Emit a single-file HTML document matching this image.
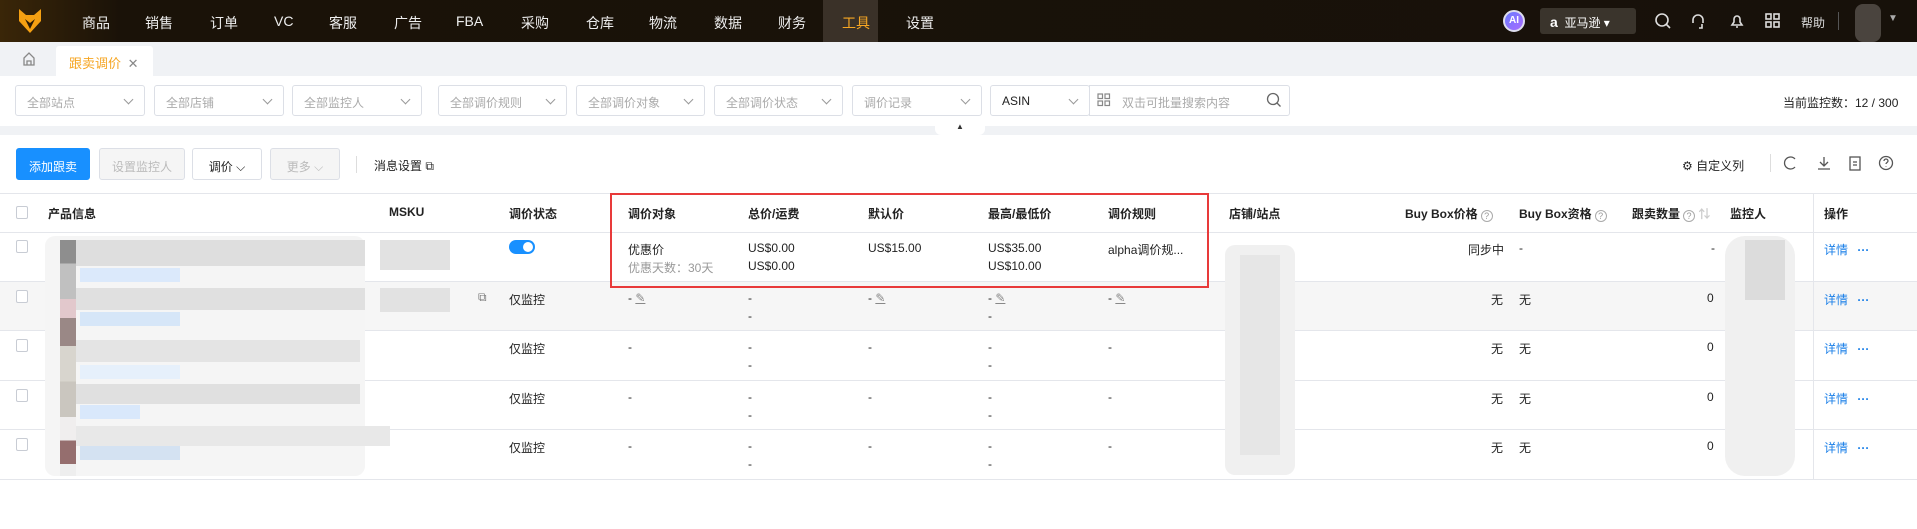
<!DOCTYPE html>
<html><head><meta charset="utf-8"><style>
*{margin:0;padding:0;box-sizing:border-box}
body{width:1917px;height:529px;overflow:hidden;background:#fff;font-family:"Liberation Sans","Noto Sans CJK SC",sans-serif;font-size:12px;color:#222;position:relative}
.a{position:absolute;white-space:nowrap}
.nav{left:0;top:0;width:1917px;height:42px;background:linear-gradient(90deg,#3a2608 0,#1a1208 120px,#17110a 100%)}
.ni{top:13px;color:#eee;font-size:14px}
.sel{height:31px;top:85px;border:1px solid #dcdfe6;border-radius:3px;color:#aaa;padding:8px 0 0 11px;font-size:12px}
.sel:after{content:"";position:absolute;right:12px;top:10px;width:6px;height:6px;border-right:1px solid #999;border-bottom:1px solid #999;transform:rotate(45deg)}
.btn{top:148px;height:32px;border:1px solid #dcdfe6;border-radius:3px;text-align:center;padding-top:9px;font-size:12px}
.th{top:205px;font-weight:bold;font-size:12px;color:#222}
.hl{left:0;width:1917px;height:1px;background:#e4e6eb}
.cb{left:16px;width:12px;height:13px;border:1px solid #c8ccd4;border-radius:2px;background:#fff}
.c{font-size:12px;color:#222}
.q{display:inline-block;width:12px;height:12px;border:1px solid #aaa;border-radius:50%;font-size:9px;color:#999;text-align:center;line-height:10px;vertical-align:-1px;margin-left:3px;font-weight:normal}
.lnk{color:#1a7fe8}
.bar{position:absolute;height:20px;background:#dedede}
</style></head><body>
<div class="a nav"></div>
<svg class="a" style="left:18px;top:8px" width="24" height="26" viewBox="0 0 24 26"><path d="M1 1 L8 7 H16 L23 1 V13 L12 25 L1 13Z" fill="#f4a012"/><path d="M7 11 L12 15 L17 11 L12 21Z" fill="#2a1a05"/></svg>
<div class="a ni" style="left:82px">商品</div><div class="a ni" style="left:145px">销售</div><div class="a ni" style="left:210px">订单</div><div class="a ni" style="left:274px">VC</div><div class="a ni" style="left:329px">客服</div><div class="a ni" style="left:394px">广告</div><div class="a ni" style="left:456px">FBA</div><div class="a ni" style="left:521px">采购</div><div class="a ni" style="left:586px">仓库</div><div class="a ni" style="left:649px">物流</div><div class="a ni" style="left:714px">数据</div><div class="a ni" style="left:778px">财务</div>
<div class="a" style="left:823px;top:0;width:55px;height:42px;background:#3a3128"></div>
<div class="a ni" style="left:842px;color:#f6a623">工具</div><div class="a ni" style="left:906px">设置</div>
<div class="a" style="left:1503px;top:10px;width:22px;height:22px;border-radius:50%;background:linear-gradient(135deg,#6a7bff,#a86bff);border:2px solid #dde;color:#fff;font-weight:bold;font-size:10px;text-align:center;line-height:18px">AI</div>
<div class="a" style="left:1540px;top:8px;width:96px;height:26px;background:#3a342c;border-radius:3px;color:#fff;font-size:12px;padding:6px 0 0 10px"><b style="font-size:14px">a</b>&nbsp; 亚马逊 ▾</div>
<svg class="a" style="left:1654px;top:12px" width="18" height="18"><circle cx="8" cy="8" r="6" fill="none" stroke="#ddd" stroke-width="1.6"/><path d="M12 12l4 4" stroke="#ddd" stroke-width="1.6"/></svg>
<svg class="a" style="left:1689px;top:12px" width="18" height="18"><path d="M4 11V8a5 5 0 0110 0v3M10 16h3v-4" fill="none" stroke="#ddd" stroke-width="1.6"/></svg>
<svg class="a" style="left:1728px;top:12px" width="18" height="18"><path d="M4 13h10l-2-3V7a3 3 0 00-6 0v3z M8 15h2" fill="none" stroke="#ddd" stroke-width="1.6"/></svg>
<svg class="a" style="left:1764px;top:12px" width="18" height="18"><g fill="none" stroke="#ddd" stroke-width="1.6"><rect x="2" y="2" width="5" height="5"/><rect x="10" y="2" width="5" height="5"/><rect x="2" y="10" width="5" height="5"/><rect x="10" y="10" width="5" height="5"/></g></svg>
<div class="a" style="left:1801px;top:14px;color:#ddd;font-size:12px">帮助</div>
<div class="a" style="left:1838px;top:12px;width:1px;height:18px;background:#555"></div>
<div class="a" style="left:1855px;top:4px;width:26px;height:38px;background:#4a443e;border-radius:8px"></div>
<div class="a" style="left:1888px;top:13px;color:#aaa;font-size:10px">▼</div>
<div class="a" style="left:0;top:42px;width:1917px;height:34px;background:#f0f2f5"></div>
<svg class="a" style="left:22px;top:51px" width="14" height="16"><path d="M2 7L7 2l5 5v7H2z M5 14v-4h4v4" fill="none" stroke="#888" stroke-width="1.3"/></svg>
<div class="a" style="left:56px;top:46px;width:97px;height:30px;background:#fff;border-radius:3px 3px 0 0"></div>
<div class="a" style="left:69px;top:53px;color:#f6a623;font-size:13px">跟卖调价 <span style="color:#888;margin-left:3px">✕</span></div>
<div class="a sel" style="left:15px;width:130px">全部站点</div>
<div class="a sel" style="left:154px;width:130px">全部店铺</div>
<div class="a sel" style="left:292px;width:130px">全部监控人</div>
<div class="a sel" style="left:438px;width:129px">全部调价规则</div>
<div class="a sel" style="left:576px;width:129px">全部调价对象</div>
<div class="a sel" style="left:714px;width:129px">全部调价状态</div>
<div class="a sel" style="left:852px;width:130px">调价记录</div>
<div class="a sel" style="left:990px;width:100px;color:#222">ASIN</div>
<div class="a" style="left:1089px;top:85px;width:201px;height:31px;border:1px solid #dcdfe6;border-radius:0 3px 3px 0;color:#aaa;padding:8px 0 0 32px">双击可批量搜索内容</div>
<svg class="a" style="left:1097px;top:93px" width="14" height="14"><g fill="none" stroke="#888" stroke-width="1.2"><rect x="1" y="1" width="4.5" height="4.5"/><rect x="8" y="1" width="4.5" height="4.5"/><rect x="1" y="8" width="4.5" height="4.5"/><rect x="8" y="8" width="4.5" height="4.5"/></g></svg>
<svg class="a" style="left:1266px;top:92px" width="16" height="16"><circle cx="7" cy="7" r="5.5" fill="none" stroke="#666" stroke-width="1.3"/><path d="M11 11l3.5 3.5" stroke="#666" stroke-width="1.3"/></svg>
<div class="a" style="left:1783px;top:94px;font-size:12px">当前监控数：12 / 300</div>
<div class="a" style="left:0;top:126px;width:1917px;height:9px;background:#f0f2f5"></div>
<div class="a" style="left:935px;top:120px;width:50px;height:15px;background:#fff;border-radius:0 0 6px 6px;text-align:center;font-size:8px;color:#333;line-height:14px">▲</div>
<div class="a btn" style="left:16px;width:74px;background:#1890ff;border-color:#1890ff;color:#fff">添加跟卖</div>
<div class="a btn" style="left:99px;width:86px;background:#f5f5f5;color:#bbb">设置监控人</div>
<div class="a btn" style="left:192px;width:70px">调价 ⌵</div>
<div class="a btn" style="left:270px;width:70px;background:#f5f5f5;color:#bbb">更多 ⌵</div>
<div class="a" style="left:356px;top:156px;width:1px;height:17px;background:#ddd"></div>
<div class="a" style="left:374px;top:157px">消息设置 ⧉</div>
<div class="a" style="left:1682px;top:157px">⚙ 自定义列</div>
<div class="a" style="left:1770px;top:154px;width:1px;height:18px;background:#ddd"></div>
<svg class="a" style="left:1782px;top:154px" width="112" height="18"><g fill="none" stroke="#555" stroke-width="1.3"><path d="M13 5a6 6 0 100 8"/><path d="M42 3v9M38 8l4 4 4-4M36 15h12"/><rect x="68" y="3" width="10" height="13"/><path d="M71 8h4M71 11h4"/><circle cx="104" cy="9" r="6.5"/><path d="M102 7a2 2 0 114 0c0 1.5-2 1.5-2 3M104 12.5v.5"/></g></svg>
<div class="a hl" style="top:193px"></div>
<div class="a hl" style="top:232px"></div>
<div class="a" style="left:0;top:281px;width:1917px;height:49px;background:#f6f6f6"></div>
<div class="a hl" style="top:281px"></div><div class="a hl" style="top:330px"></div><div class="a hl" style="top:380px"></div><div class="a hl" style="top:429px"></div><div class="a hl" style="top:479px"></div>
<div class="a" style="left:1813px;top:193px;width:1px;height:286px;background:#e4e6eb"></div>
<div class="a cb" style="top:206px"></div>
<div class="a th" style="left:48px">产品信息</div><div class="a th" style="left:389px">MSKU</div><div class="a th" style="left:509px">调价状态</div><div class="a th" style="left:628px">调价对象</div><div class="a th" style="left:748px">总价/运费</div><div class="a th" style="left:868px">默认价</div><div class="a th" style="left:988px">最高/最低价</div><div class="a th" style="left:1108px">调价规则</div><div class="a th" style="left:1229px">店铺/站点</div><div class="a th" style="left:1405px">Buy Box价格<span class="q">?</span></div><div class="a th" style="left:1519px">Buy Box资格<span class="q">?</span></div><div class="a th" style="left:1632px">跟卖数量<span class="q">?</span> <span style="color:#ccc">⇅</span></div><div class="a th" style="left:1730px">监控人</div><div class="a th" style="left:1824px">操作</div>
<div class="a" style="left:610px;top:193px;width:599px;height:95px;border:2px solid #e83a3a"></div>
<!-- blurred blocks -->
<div class="a" style="left:45px;top:236px;width:320px;height:240px;background:#f5f5f5;border-radius:10px"></div>
<div class="bar" style="left:60px;top:240px;width:305px;height:26px"></div>
<div class="bar" style="left:60px;top:288px;width:305px;height:22px;background:#e0e0e0"></div>
<div class="bar" style="left:60px;top:340px;width:300px;height:22px;background:#e4e4e4"></div>
<div class="bar" style="left:60px;top:384px;width:300px;height:20px;background:#e0e0e0"></div>
<div class="bar" style="left:60px;top:426px;width:330px;height:20px;background:#e8e8e8"></div>
<div class="a" style="left:60px;top:240px;width:16px;height:236px;background:linear-gradient(#8e8e8e 0 10%,#c0c0c0 10% 25%,#e2c8cc 25% 33%,#9a8886 33% 45%,#d8d5ce 45% 60%,#cac6bf 60% 75%,#f0eeee 75% 85%,#956e6e 85% 95%,#eee 95%)"></div>
<div class="a" style="left:80px;top:268px;width:100px;height:14px;background:#dbe9fb"></div>
<div class="a" style="left:80px;top:312px;width:100px;height:14px;background:#d6e6f8"></div>
<div class="a" style="left:80px;top:365px;width:100px;height:14px;background:#e6f0fb"></div>
<div class="a" style="left:80px;top:405px;width:60px;height:14px;background:#d9e8fb"></div>
<div class="a" style="left:80px;top:446px;width:100px;height:14px;background:#d4e2f2"></div>
<div class="a" style="left:380px;top:240px;width:70px;height:30px;background:#e2e2e2"></div>
<div class="a" style="left:380px;top:288px;width:70px;height:24px;background:#e2e2e2"></div>
<div class="a" style="left:1225px;top:245px;width:70px;height:230px;background:#f0f0f0;border-radius:10px"></div>
<div class="a" style="left:1240px;top:255px;width:40px;height:200px;background:#e6e6e6"></div>
<div class="a" style="left:1725px;top:236px;width:70px;height:240px;background:#f0f0f0;border-radius:20px"></div>
<div class="a" style="left:1745px;top:240px;width:40px;height:60px;background:#dcdcdc"></div>
<!-- row1 -->
<div class="a cb" style="top:240px"></div>
<div class="a" style="left:509px;top:240px;width:26px;height:14px;border-radius:7px;background:#1890ff"><div style="position:absolute;right:2px;top:2px;width:10px;height:10px;border-radius:50%;background:#fff"></div></div>
<div class="a c" style="left:628px;top:241px">优惠价</div><div class="a c" style="left:628px;top:259px;color:#999">优惠天数：30天</div>
<div class="a c" style="left:748px;top:241px">US$0.00</div><div class="a c" style="left:748px;top:259px">US$0.00</div>
<div class="a c" style="left:868px;top:241px">US$15.00</div>
<div class="a c" style="left:988px;top:241px">US$35.00</div><div class="a c" style="left:988px;top:259px">US$10.00</div>
<div class="a c" style="left:1108px;top:241px">alpha调价规...</div>
<div class="a c" style="left:1468px;top:241px">同步中</div><div class="a c" style="left:1519px;top:241px">-</div><div class="a c" style="left:1711px;top:241px">-</div>
<div class="a c lnk" style="left:1824px;top:241px">详情 <b style="margin-left:6px">···</b></div>
<!-- rows 2-5 -->
<div class="a cb" style="top:290px"></div><div class="a cb" style="top:339px"></div><div class="a cb" style="top:389px"></div><div class="a cb" style="top:438px"></div>
<div class="a c" style="left:478px;top:290px;color:#777">⧉</div>
<div class="a c" style="left:509px;top:291px">仅监控</div><div class="a c" style="left:509px;top:340px">仅监控</div><div class="a c" style="left:509px;top:390px">仅监控</div><div class="a c" style="left:509px;top:439px">仅监控</div>
<div class="a c" style="left:628px;top:291px">- <u style="color:#888">✎</u></div><div class="a c" style="left:868px;top:291px">- <u style="color:#888">✎</u></div><div class="a c" style="left:988px;top:291px">- <u style="color:#888">✎</u></div><div class="a c" style="left:1108px;top:291px">- <u style="color:#888">✎</u></div>
<div class="a c" style="left:748px;top:291px">-</div><div class="a c" style="left:748px;top:309px">-</div><div class="a c" style="left:988px;top:309px">-</div>
<div class="a c" style="left:628px;top:340px">-</div><div class="a c" style="left:748px;top:340px">-</div><div class="a c" style="left:748px;top:358px">-</div><div class="a c" style="left:868px;top:340px">-</div><div class="a c" style="left:988px;top:340px">-</div><div class="a c" style="left:988px;top:358px">-</div><div class="a c" style="left:1108px;top:340px">-</div>
<div class="a c" style="left:628px;top:390px">-</div><div class="a c" style="left:748px;top:390px">-</div><div class="a c" style="left:748px;top:408px">-</div><div class="a c" style="left:868px;top:390px">-</div><div class="a c" style="left:988px;top:390px">-</div><div class="a c" style="left:988px;top:408px">-</div><div class="a c" style="left:1108px;top:390px">-</div>
<div class="a c" style="left:628px;top:439px">-</div><div class="a c" style="left:748px;top:439px">-</div><div class="a c" style="left:748px;top:457px">-</div><div class="a c" style="left:868px;top:439px">-</div><div class="a c" style="left:988px;top:439px">-</div><div class="a c" style="left:988px;top:457px">-</div><div class="a c" style="left:1108px;top:439px">-</div>
<div class="a c" style="left:1491px;top:291px">无</div><div class="a c" style="left:1519px;top:291px">无</div><div class="a c" style="left:1707px;top:291px">0</div><div class="a c lnk" style="left:1824px;top:291px">详情 <b style="margin-left:6px">···</b></div>
<div class="a c" style="left:1491px;top:340px">无</div><div class="a c" style="left:1519px;top:340px">无</div><div class="a c" style="left:1707px;top:340px">0</div><div class="a c lnk" style="left:1824px;top:340px">详情 <b style="margin-left:6px">···</b></div>
<div class="a c" style="left:1491px;top:390px">无</div><div class="a c" style="left:1519px;top:390px">无</div><div class="a c" style="left:1707px;top:390px">0</div><div class="a c lnk" style="left:1824px;top:390px">详情 <b style="margin-left:6px">···</b></div>
<div class="a c" style="left:1491px;top:439px">无</div><div class="a c" style="left:1519px;top:439px">无</div><div class="a c" style="left:1707px;top:439px">0</div><div class="a c lnk" style="left:1824px;top:439px">详情 <b style="margin-left:6px">···</b></div>
</body></html>
